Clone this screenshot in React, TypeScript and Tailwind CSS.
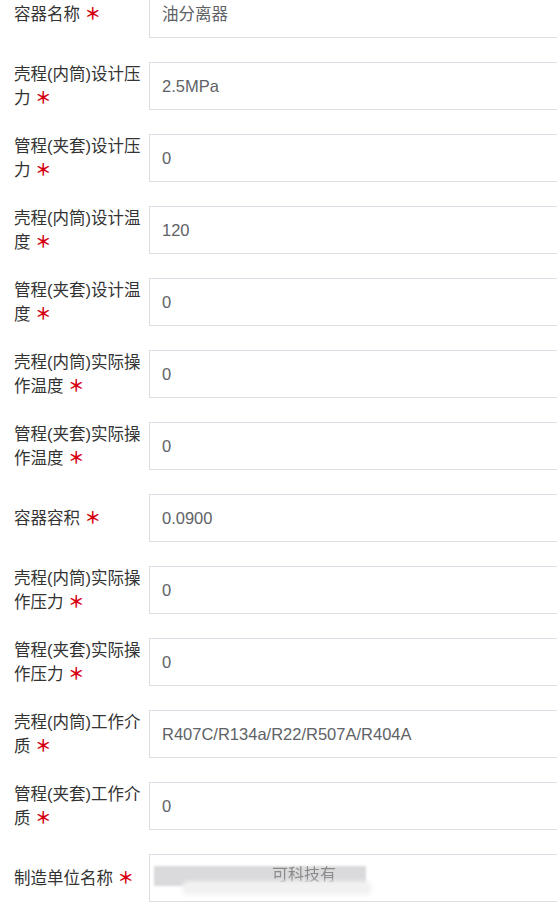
const fields: { label: string; value: string; masked?: boolean }[] = [
  { label: '容器名称', value: '油分离器' },
  { label: '壳程(内筒)设计压力', value: '2.5MPa' },
  { label: '管程(夹套)设计压力', value: '0' },
  { label: '壳程(内筒)设计温度', value: '120' },
  { label: '管程(夹套)设计温度', value: '0' },
  { label: '壳程(内筒)实际操作温度', value: '0' },
  { label: '管程(夹套)实际操作温度', value: '0' },
  { label: '容器容积', value: '0.0900' },
  { label: '壳程(内筒)实际操作压力', value: '0' },
  { label: '管程(夹套)实际操作压力', value: '0' },
  { label: '壳程(内筒)工作介质', value: 'R407C/R134a/R22/R507A/R404A' },
  { label: '管程(夹套)工作介质', value: '0' },
  { label: '制造单位名称', value: '', masked: true },
]

// blurred-out company name, as in the screenshot
function MaskedValue() {
  return (
    <div className="relative -ml-[10px] h-[34px] w-[230px]">
      <div className="absolute left-[2px] top-[5px] h-[20px] w-[212px] bg-[#dadadc] blur-[1px]" />
      <div className="absolute left-[120px] top-[3px] text-[16px] leading-[22px] text-[#8a8a8a] blur-[0.7px]">
        可科技有
      </div>
      <div className="absolute left-[30px] top-[20px] h-[14px] w-[190px] rounded-full bg-[#f1f1f2] blur-[2px]" />
    </div>
  )
}

export default function App() {
  return (
    <div
      className="min-h-screen overflow-hidden bg-white"
      style={{ fontFamily: '"Liberation Sans", "Noto Sans CJK SC", sans-serif' }}
    >
      <div className="-mt-[10px] flex flex-col gap-[24px]">
        {fields.map((f) => (
          <div key={f.label} className="flex items-center">
            <label className="w-[149px] shrink-0 pl-[14px] pr-[6px] text-[16.5px] leading-[24px] text-[#333333]">
              {f.label}{' '}
              <span className="font-bold text-[#d7000f]">＊</span>
            </label>
            <div className="-mr-[20px] flex h-[48px] flex-1 items-center border border-[#dcdfe6] bg-white pl-[12px] text-[16.5px] text-[#606266]">
              {f.masked ? <MaskedValue /> : f.value}
            </div>
          </div>
        ))}
      </div>
    </div>
  )
}
